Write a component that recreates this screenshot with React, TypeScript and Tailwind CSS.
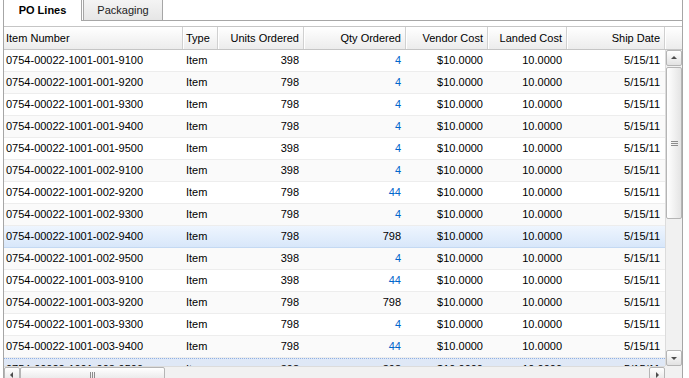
import React from "react";

type Line = {
  item: string;
  units: string;
  qty: string;
  plain?: boolean;
};

const lines: Line[] = [
  { item: "0754-00022-1001-001-9100", units: "398", qty: "4" },
  { item: "0754-00022-1001-001-9200", units: "798", qty: "4" },
  { item: "0754-00022-1001-001-9300", units: "798", qty: "4" },
  { item: "0754-00022-1001-001-9400", units: "798", qty: "4" },
  { item: "0754-00022-1001-001-9500", units: "398", qty: "4" },
  { item: "0754-00022-1001-002-9100", units: "398", qty: "4" },
  { item: "0754-00022-1001-002-9200", units: "798", qty: "44" },
  { item: "0754-00022-1001-002-9300", units: "798", qty: "4" },
  { item: "0754-00022-1001-002-9400", units: "798", qty: "798", plain: true },
  { item: "0754-00022-1001-002-9500", units: "398", qty: "4" },
  { item: "0754-00022-1001-003-9100", units: "398", qty: "44" },
  { item: "0754-00022-1001-003-9200", units: "798", qty: "798", plain: true },
  { item: "0754-00022-1001-003-9300", units: "798", qty: "4" },
  { item: "0754-00022-1001-003-9400", units: "798", qty: "44" },
  { item: "0754-00022-1001-003-9500", units: "398", qty: "398", plain: true },
];

const HeaderCell = ({
  label,
  className,
}: {
  label: string;
  className: string;
}) => (
  <div
    className={
      "flex h-full items-center border-r border-r-[#d0d0d0] border-l border-l-white " +
      className
    }
  >
    {label}
  </div>
);

const ArrowButton = ({ dir }: { dir: "up" | "down" | "left" | "right" }) => {
  const pts = {
    up: "2,6 5,3 8,6",
    down: "2,4 5,7 8,4",
    left: "6,2 3,5 6,8",
    right: "4,2 7,5 4,8",
  }[dir];
  return (
    <div className="flex h-[16px] w-[16px] shrink-0 items-center justify-center rounded-[2px] border border-[#b5b5b5] bg-gradient-to-b from-white to-[#e2e2e2]">
      <svg width="10" height="10" viewBox="0 0 10 10">
        <polygon points={pts} fill="#4d4d4d" />
      </svg>
    </div>
  );
};

export default function App() {
  return (
    <div className="h-[378px] w-[689px] overflow-hidden bg-white font-['Liberation_Sans',Arial,sans-serif] text-[11px] text-black">
      {/* tab strip */}
      <div className="flex h-[21px] items-stretch pl-[3px]">
        <div className="flex w-[79px] items-center justify-center border-x border-[#a6a6a6] bg-white text-[11px] font-bold">
          PO Lines
        </div>
        <div className="w-[1px] border-b border-[#a6a6a6]" />
        <div className="flex w-[80px] items-center justify-center border-x border-b border-[#a6a6a6] bg-gradient-to-b from-[#f4f4f4] to-[#e6e6e6] text-[#222]">
          Packaging
        </div>
        <div className="w-[520px] border-b border-r border-[#a6a6a6]" />
      </div>

      {/* panel body */}
      <div className="ml-[3px] w-[680px] border-x border-[#a6a6a6] pt-[5px]">
        <div className="border-t border-[#c5c5c5]">
          {/* header */}
          <div className="flex h-[23px] border-b border-[#c5c5c5] bg-gradient-to-b from-white to-[#ececec]">
            <HeaderCell label="Item Number" className="w-[179px] pl-[2px] border-l-0" />
            <HeaderCell label="Type" className="w-[35px] pl-[2px]" />
            <HeaderCell label="Units Ordered" className="w-[86px] justify-end pr-[4px]" />
            <HeaderCell label="Qty Ordered" className="w-[102px] justify-end pr-[4px]" />
            <HeaderCell label="Vendor Cost" className="w-[82px] justify-end pr-[4px]" />
            <HeaderCell label="Landed Cost" className="w-[79px] justify-end pr-[4px]" />
            <HeaderCell label="Ship Date" className="w-[98px] justify-end pr-[4px]" />
            <div className="flex-1 border-l border-l-white" />
          </div>

          {/* rows + vertical scroll */}
          <div className="flex h-[316px]">
            <div className="w-[661px] overflow-hidden">
              {lines.map((l, i) => {
                let rowCls = i % 2 === 1 ? "bg-[#fafafa] border-b-[#ededed]" : "bg-white border-b-[#ededed]";
                if (i === 8)
                  rowCls = "bg-gradient-to-b from-[#eef5fe] to-[#d8e7fa] border-b-[#c4d9f3]";
                if (i === 14)
                  rowCls = "bg-[#dfe8f6] border-t border-dotted border-t-[#8fb0e4] border-b-[#dfe8f6]";
                return (
                  <div key={l.item} className={"flex h-[22px] items-center border-b " + rowCls}>
                    <div className="w-[179px] pl-[2px]">{l.item}</div>
                    <div className="w-[35px] pl-[3px]">Item</div>
                    <div className="w-[86px] pr-[5px] text-right">{l.units}</div>
                    <div className={"w-[102px] pr-[5px] text-right " + (l.plain ? "text-black" : "text-[#0066cc]")}>
                      {l.qty}
                    </div>
                    <div className="w-[82px] pr-[5px] text-right">$10.0000</div>
                    <div className="w-[79px] pr-[5px] text-right">10.0000</div>
                    <div className="w-[98px] pr-[5px] text-right">5/15/11</div>
                  </div>
                );
              })}
            </div>
            <div className="flex w-[17px] flex-col border-l border-[#dcdcdc] bg-[#f1f1f1]">
              <ArrowButton dir="up" />
              <div className="mt-[1px] flex h-[152px] w-[16px] items-center justify-center rounded-[2px] border border-[#b5b5b5] bg-gradient-to-r from-white to-[#e4e4e4]">
                <div className="flex flex-col gap-[1px]">
                  <div className="h-[1px] w-[7px] bg-[#8c8c8c]" />
                  <div className="h-[1px] w-[7px] bg-[#8c8c8c]" />
                  <div className="h-[1px] w-[7px] bg-[#8c8c8c]" />
                </div>
              </div>
              <div className="flex-1" />
              <ArrowButton dir="down" />
            </div>
          </div>

          {/* horizontal scroll */}
          <div className="flex h-[17px]">
            <div className="flex w-[661px] items-center bg-[#f1f1f1] border-t border-[#dcdcdc]">
              <ArrowButton dir="left" />
              <div className="flex h-[16px] w-[145px] items-center justify-center rounded-[2px] border border-[#b5b5b5] bg-gradient-to-b from-white to-[#e4e4e4]">
                <div className="flex gap-[1px]">
                  <div className="h-[7px] w-[1px] bg-[#8c8c8c]" />
                  <div className="h-[7px] w-[1px] bg-[#8c8c8c]" />
                  <div className="h-[7px] w-[1px] bg-[#8c8c8c]" />
                </div>
              </div>
              <div className="flex-1" />
              <ArrowButton dir="right" />
            </div>
            <div className="w-[17px] bg-[#f1f1f1]" />
          </div>
        </div>
      </div>
    </div>
  );
}
